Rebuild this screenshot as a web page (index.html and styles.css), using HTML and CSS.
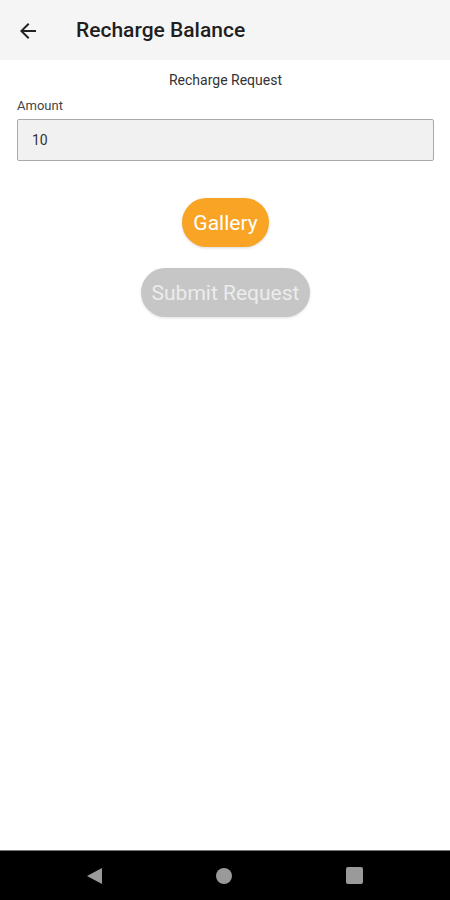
FILE: index.html
```html
<!DOCTYPE html>
<html lang="en">
<head>
  <meta charset="UTF-8" />
  <meta name="viewport" content="width=device-width, initial-scale=1.0" />
  <title>Recharge Balance</title>
  <link rel="stylesheet" href="styles.css">
</head>
<body>
  <div class="screen">
    <header class="app-bar">
      <button class="back-btn" aria-label="Back">
        <svg width="24" height="24" viewBox="0 0 24 24"><path d="M20 11H7.83l5.59-5.59L12 4l-8 8 8 8 1.41-1.41L7.83 13H20v-2z" fill="#222"/></svg>
      </button>
      <h1>Recharge Balance</h1>
    </header>

    <main class="content">
      <p class="section-title">Recharge Request</p>
      <label class="field-label" for="amount">Amount</label>
      <input class="field-input" id="amount" type="text" value="10" />

      <div class="actions">
        <button class="pill-btn gallery-btn">Gallery</button>
        <button class="pill-btn submit-btn" disabled>Submit Request</button>
      </div>
    </main>

    <nav class="sys-nav">
      <span class="nav-back"></span>
      <span class="nav-home"></span>
      <span class="nav-recent"></span>
    </nav>
  </div>
</body>
</html>
```

FILE: styles.css
```css
body {
  margin: 0;
  font-family: Roboto, 'Liberation Sans', sans-serif;
  background: #fff;
  color: #222;
}
.screen {
  width: 450px;
  height: 900px;
  display: flex;
  flex-direction: column;
}
.app-bar {
  height: 60px;
  background-color: #f5f5f5;
  display: flex;
  align-items: center;
  padding-left: 16px;
  box-sizing: border-box;
}
.back-btn {
  border: none;
  background: none;
  padding: 0;
  width: 24px;
  height: 24px;
  margin-top: 1px;
}
.app-bar h1 {
  margin: 0 0 0 36px;
  font-size: 21px;
  font-weight: 500;
  color: #1f1f1f;
}
.content {
  flex: 1;
  padding: 0 16px 0 17px;
}
.section-title {
  margin: 11px 0 0;
  text-align: center;
  font-size: 14px;
  color: #333;
  line-height: 18px;
}
.field-label {
  display: block;
  margin-top: 8px;
  font-size: 13px;
  color: #444;
  line-height: 17px;
}
.field-input {
  display: block;
  box-sizing: border-box;
  width: 417px;
  height: 42px;
  margin-top: 5px;
  padding: 0 14px;
  border: 1px solid #a9a9a9;
  border-radius: 2px;
  background: #f1f1f1;
  font-family: Roboto, 'Liberation Sans', sans-serif;
  font-size: 14px;
  color: #333;
  outline: none;
}
.actions {
  display: flex;
  flex-direction: column;
  align-items: center;
  gap: 21px;
  margin-top: 37px;
}
.pill-btn {
  height: 49px;
  border: none;
  border-radius: 25px;
  font-family: Roboto, 'Liberation Sans', sans-serif;
  font-size: 21px;
  padding: 0 11px;
}
.gallery-btn {
  background-color: #f9a425;
  color: #fff;
  box-shadow: 0 1px 3px rgba(0, 0, 0, 0.15);
}
.submit-btn {
  background-color: #c6c6c6;
  color: #ececec;
  box-shadow: 0 1px 3px rgba(0, 0, 0, 0.12);
}
.sys-nav {
  height: 50px;
  background: #000;
  display: flex;
  align-items: center;
  justify-content: center;
  gap: 114px;
  border-top: 1px solid #777;
  box-sizing: border-box;
}
.nav-back {
  width: 0;
  height: 0;
  border-top: 8px solid transparent;
  border-bottom: 8px solid transparent;
  border-right: 15px solid #9a9a9a;
}
.nav-home {
  width: 16px;
  height: 16px;
  border-radius: 50%;
  background: #9a9a9a;
}
.nav-recent {
  width: 17px;
  height: 17px;
  border-radius: 2px;
  background: #9a9a9a;
}
```
